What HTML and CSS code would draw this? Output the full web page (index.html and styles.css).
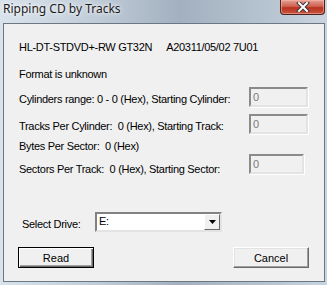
FILE: index.html
```html
<!DOCTYPE html>
<html lang="en">
<head>
    <meta charset="UTF-8">
    <title>Ripping CD by Tracks</title>
    <link rel="stylesheet" href="styles.css">
</head>
<body>
    <div class="window">
        <div class="titlebar">
            <div class="title-text">Ripping CD by Tracks</div>
            <div class="close-btn">
                <svg width="14" height="10" viewBox="0 0 14 10">
                    <path d="M3 1 L11 9 M11 1 L3 9" stroke="#3a3a3a" stroke-width="4" stroke-linecap="square"/>
                    <path d="M3 1 L11 9 M11 1 L3 9" stroke="#ffffff" stroke-width="2" stroke-linecap="square"/>
                </svg>
            </div>
        </div>

        <div class="client">
            <div class="row drive-name">HL-DT-STDVD+-RW GT32N<span class="gap"></span>A20311/05/02 7U01</div>
            <div class="row format">Format is unknown</div>

            <div class="row field-row cyl">
                <span class="label">Cylinders range: 0 - 0 (Hex), Starting Cylinder:</span>
                <div class="field">0</div>
            </div>

            <div class="row field-row tracks">
                <span class="label">Tracks Per Cylinder:&nbsp; 0 (Hex), Starting Track:</span>
                <div class="field">0</div>
            </div>

            <div class="row bytes">Bytes Per Sector:&nbsp; 0 (Hex)</div>

            <div class="row field-row sectors">
                <span class="label">Sectors Per Track:&nbsp; 0 (Hex), Starting Sector:</span>
                <div class="field narrow">0</div>
            </div>

            <div class="row drive-row">
                <span class="label">Select Drive:</span>
                <div class="select">
                    <span class="select-value">E:</span>
                    <span class="select-arrow">
                        <svg width="7" height="4" viewBox="0 0 7 4"><path d="M0 0 H7 L3.5 4 Z" fill="#000"/></svg>
                    </span>
                </div>
            </div>

            <div class="row buttons">
                <button class="btn default">Read</button>
                <button class="btn">Cancel</button>
            </div>
        </div>
    </div>
</body>
</html>
```

FILE: styles.css
```css
body {
    margin: 0;
    width: 327px;
    height: 285px;
    overflow: hidden;
    font-family: 'Liberation Sans', Arial, sans-serif;
}

.window {
    width: 327px;
    height: 285px;
    box-sizing: border-box;
    padding: 0 2px 3px 3px;
    background: linear-gradient(90deg, #d9e3ec 0%, #bfcbd7 30%, #a3b0bf 55%, #b5c2cf 80%, #c9d4df 100%);
    display: flex;
    flex-direction: column;
}

.titlebar {
    height: 23px;
    display: flex;
    justify-content: space-between;
    align-items: flex-start;
}

.title-text {
    font-family: 'Noto Sans', 'Open Sans', sans-serif;
    font-size: 12px;
    line-height: 12px;
    padding-top: 3px;
    color: #1b1b1b;
    text-shadow: 0 0 6px rgba(255,255,255,0.9), 0 0 3px rgba(255,255,255,0.9);
}

.close-btn {
    width: 45px;
    height: 15px;
    box-sizing: border-box;
    border: 1px solid #4d2320;
    border-top: none;
    border-radius: 0 0 4px 4px;
    background: linear-gradient(180deg, #e4a093 0%, #cf6251 45%, #b8321f 55%, #c9543e 100%);
    box-shadow: inset 0 0 0 1px rgba(255,190,180,0.5);
    display: flex;
    justify-content: center;
    align-items: center;
}

.client {
    flex: 1;
    background: #f0f0f0;
    border: 1px solid #6c7784;
    font-size: 11px;
    letter-spacing: -0.3px;
    color: #000;
    padding: 15px 0 0 0;
}

.row {
    display: flex;
    align-items: center;
    padding-left: 15px;
    white-space: nowrap;
    height: 16px;
}

.gap {
    width: 14px;
}

.format {
    margin-top: 11px;
}

.field-row {
    height: 20px;
}

.cyl {
    margin-top: 5px;
}

.tracks {
    margin-top: 7px;
}

.bytes {
    margin-top: 4px;
}

.field-row .label {
    padding-top: 4px;
}

.sectors .label {
    padding-top: 10px;
}

.field {
    margin-left: auto;
    margin-right: 16px;
    width: 59px;
    height: 20px;
    box-sizing: border-box;
    border-style: solid;
    border-width: 2px;
    border-color: #8a8a8a #e3e3e3 #e3e3e3 #8a8a8a;
    box-shadow: 1px 1px 0 #ffffff;
    background: #f0f0f0;
    color: #7a7a7a;
    padding: 1px 0 0 2px;
    line-height: 14px;
}

.field.narrow {
    width: 55px;
    margin-right: 20px;
}

.drive-row {
    margin-top: 38px;
    height: 20px;
    padding-left: 18px;
}

.drive-row .label {
    padding-top: 4px;
    width: 73px;
}

.select {
    width: 127px;
    height: 20px;
    box-sizing: border-box;
    border-style: solid;
    border-width: 2px;
    border-color: #828282 #e3e3e3 #e3e3e3 #828282;
    background: #fff;
    display: flex;
    align-items: stretch;
}

.select-value {
    flex: 1;
    padding-left: 2px;
    line-height: 15px;
}

.select-arrow {
    width: 16px;
    box-sizing: border-box;
    background: #f0f0f0;
    border-style: solid;
    border-width: 1px;
    border-color: #ffffff #696969 #696969 #ffffff;
    display: flex;
    justify-content: center;
    align-items: center;
}

.buttons {
    margin-top: 15px;
    height: 21px;
    padding-left: 14px;
    padding-right: 15px;
    justify-content: space-between;
}

.btn {
    width: 76px;
    height: 21px;
    box-sizing: border-box;
    font-family: 'Liberation Sans', Arial, sans-serif;
    font-size: 11px;
    color: #000;
    background: #f0f0f0;
    border-style: solid;
    border-width: 1px;
    border-color: #ffffff #696969 #696969 #ffffff;
    box-shadow: inset -1px -1px 0 #a0a0a0, inset 1px 1px 0 #e3e3e3;
    padding: 0;
}

.btn.default {
    border: 1px solid #000;
    box-shadow: inset 1px 1px 0 #ffffff, inset -1px -1px 0 #696969, inset -2px -2px 0 #a0a0a0;
}
```
